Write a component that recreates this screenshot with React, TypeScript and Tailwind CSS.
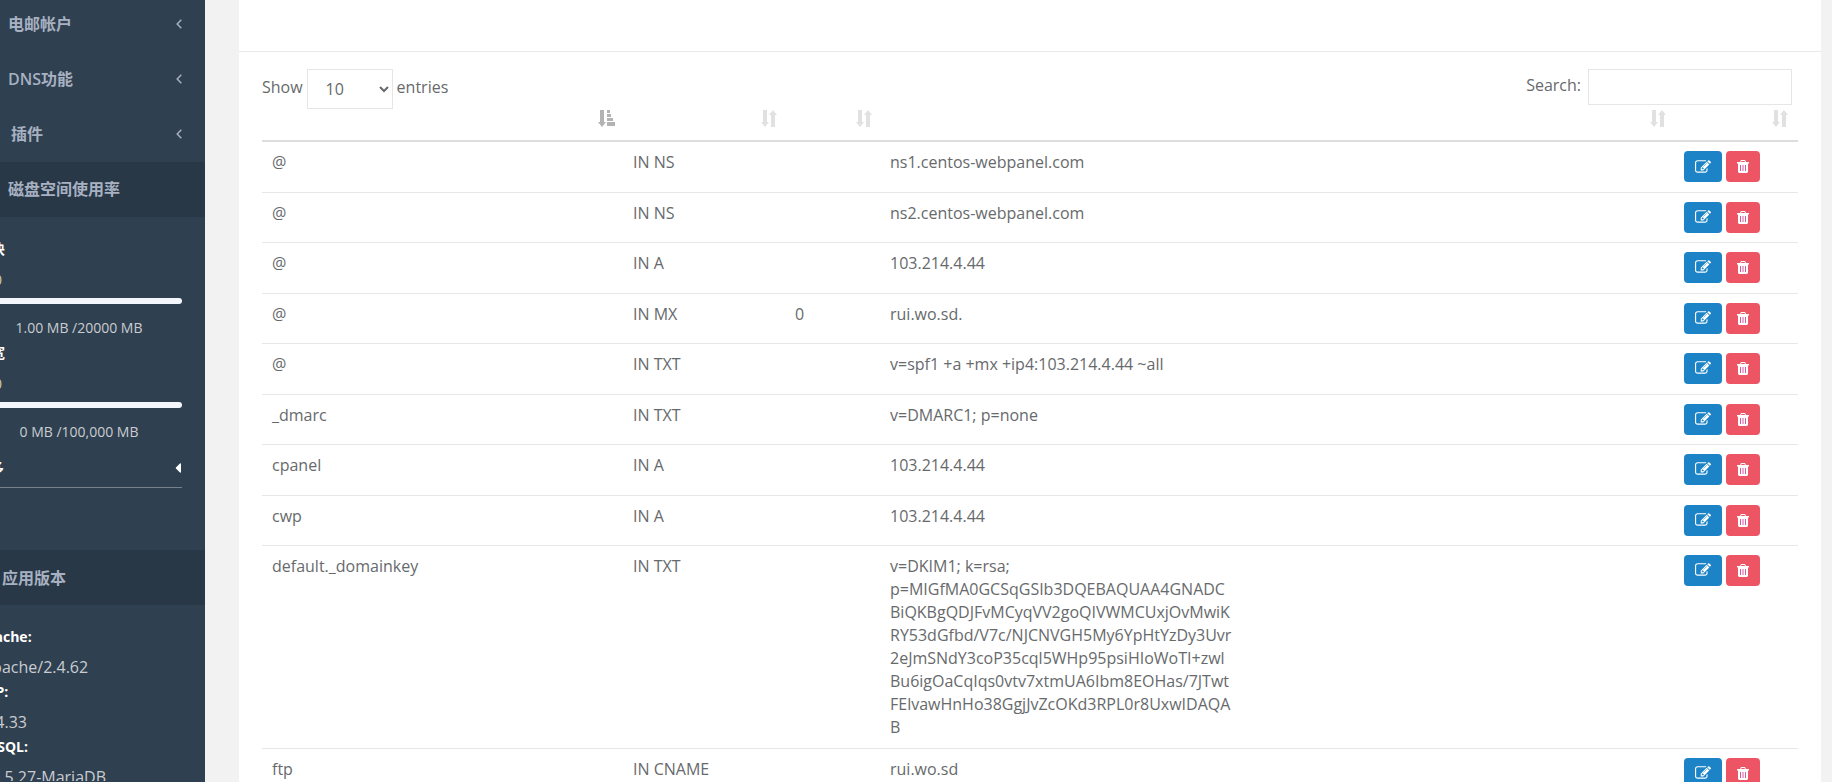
import { FaCaretLeft } from "react-icons/fa";

interface DnsRecord {
  name: string;
  type: string;
  priority?: string;
  value: string;
}

const records: DnsRecord[] = [
  { name: "@", type: "IN NS", value: "ns1.centos-webpanel.com" },
  { name: "@", type: "IN NS", value: "ns2.centos-webpanel.com" },
  { name: "@", type: "IN A", value: "103.214.4.44" },
  { name: "@", type: "IN MX", priority: "0", value: "rui.wo.sd." },
  { name: "@", type: "IN TXT", value: "v=spf1 +a +mx +ip4:103.214.4.44 ~all" },
  { name: "_dmarc", type: "IN TXT", value: "v=DMARC1; p=none" },
  { name: "cpanel", type: "IN A", value: "103.214.4.44" },
  { name: "cwp", type: "IN A", value: "103.214.4.44" },
  {
    name: "default._domainkey",
    type: "IN TXT",
    value:
      "v=DKIM1; k=rsa; p=MIGfMA0GCSqGSIb3DQEBAQUAA4GNADCBiQKBgQDJFvMCyqVV2goQIVWMCUxjOvMwiKRY53dGfbd/V7c/NJCNVGH5My6YpHtYzDy3Uvr2eJmSNdY3coP35cql5WHp95psiHIoWoTI+zwlBu6igOaCqIqs0vtv7xtmUA6Ibm8EOHas/7JTwtFElvawHnHo38GgjJvZcOKd3RPL0r8UxwIDAQAB",
  },
  { name: "ftp", type: "IN CNAME", value: "rui.wo.sd" },
];

const menu = [
  { label: "电邮帐户", indent: "pl-[38px]" },
  { label: "DNS功能", indent: "pl-[38px]" },
  { label: "插件", indent: "pl-[41px]" },
];

const usage = [
  { title: "硬块", percent: "0", text: "1.00 MB /20000 MB" },
  { title: "带宽", percent: "0", text: "0 MB /100,000 MB" },
];

const versions = [
  { name: "Apache:", version: "Apache/2.4.62" },
  { name: "PHP:", version: "7.4.33" },
  { name: "MySQL:", version: "10.5.27-MariaDB" },
];

const columns = ["Name", "Type", "Priority", "Value", "Actions"];

function AngleLeft() {
  return (
    <svg viewBox="0 0 6 10" className="mr-[5px] h-2.5 w-1.5 fill-none stroke-current" aria-hidden="true">
      <path d="M5.300 0.700L1.200 5l4.100 4.300" strokeWidth="1.500" />
    </svg>
  );
}

function SortIcon({ active }: { active: boolean }) {
  return active ? (
    <svg viewBox="0 0 17 17" className="ml-auto size-[17px] fill-[#b3b3b3]" aria-hidden="true">
      <path d="M2 0h4v12h2l-4 5-4-5h2zM9 0h3v3H9zM9 4h4v3H9zM9 8h6v3H9zM9 12h8v4H9z" />
    </svg>
  ) : (
    <svg viewBox="0 0 16 17" className="ml-auto h-[17px] w-4 fill-[#e1e1e1]" aria-hidden="true">
      <path d="M2 0h4v12h2l-4 5-4-5h2zM10 17h4V5h2l-4-5-4 5h2z" />
    </svg>
  );
}

function EditIcon() {
  return (
    <svg viewBox="0 0 1792 1792" className="size-4 fill-white" aria-hidden="true">
      <path d="M888 1184l116-116-152-152-116 116v56h96v96h56zm440-720q-16-16-33 1l-350 350q-17 17-1 33t33-1l350-350q17-17 1-33zm80 594v190q0 119-84.500 203.500t-203.500 84.500h-832q-119 0-203.500-84.500t-84.500-203.500v-832q0-119 84.500-203.500t203.500-84.500h832q63 0 117 25 15 7 18 23 3 17-9 29l-49 49q-14 14-32 8-23-6-45-6h-832q-66 0-113 47t-47 113v832q0 66 47 113t113 47h832q66 0 113-47t47-113v-126q0-13 9-22l64-64q15-15 35-7t20 29zm-96-738l288 288-672 672h-288v-288zm444 132l-92 92-288-288 92-92q28-28 68-28t68 28l152 152q28 28 28 68t-28 68z" />
    </svg>
  );
}

function TrashIcon() {
  return (
    <svg viewBox="0 0 12 13" className="h-[13px] w-3" aria-hidden="true">
      <path d="M4 0h4l1 2h3v1.500h-1V12l-1 1H2l-1-1V3.500H0V2h3zM4.500 1L4 2h4l-.5-1z" fill="white" fillRule="evenodd" />
      <path d="M3.500 5v6M6 5v6M8.500 5v6" stroke="#d9589d" strokeWidth="1" />
    </svg>
  );
}

function Sidebar() {
  return (
    <aside className="w-[205px] shrink-0 overflow-hidden bg-[#2f4050] text-[#a7b1c2]">
      {/* the left edge of the menu is scrolled out of view */}
      <div className="-ml-[30px] -mt-[3px]">
        <nav>
          {menu.map((item) => (
            <a
              key={item.label}
              href="#"
              className={`flex h-[55px] items-center justify-between pb-0.5 pr-[18px] font-semibold ${item.indent}`}
            >
              {item.label}
              <AngleLeft />
            </a>
          ))}
        </nav>
        <h2 className="flex h-[55px] items-center bg-[#293846] pb-0.5 pl-[38px] font-semibold">磁盘空间使用率</h2>
        <div className="h-[333px] pr-[23px] pt-5">
          {usage.map((item) => (
            <div key={item.title} className="h-[104px] text-sm">
              <div className="w-[35px] text-right font-bold leading-6 text-white">{item.title}</div>
              <div className="mb-1 w-8 pt-1 text-right leading-[29px] text-[#d8cdb8]">{item.percent}</div>
              <div className="h-1.5 rounded-full bg-[#f3f6fb]" />
              <div className="pl-1.5 pt-2.5 text-center leading-7 text-[#c9ccd0]">{item.text}</div>
            </div>
          ))}
          <a
            href="#"
            className="flex h-[43px] items-center justify-between border-b border-[#76818c] pt-1 text-sm font-bold text-white"
          >
            <span className="w-[34px] text-right">更多</span>
            <FaCaretLeft className="-mr-1 size-4" />
          </a>
        </div>
        <h2 className="flex h-[55px] items-center bg-[#293846] pl-8 font-semibold">应用版本</h2>
        <dl className="h-[176px] overflow-hidden pl-1.5 pt-[19px]">
          {versions.map((item) => (
            <div key={item.name} className="h-[55px]">
              <dt className="text-sm font-bold leading-[26px] text-white">{item.name}</dt>
              <dd className="pl-1.5 leading-[35px] text-[#c9ccd0]">{item.version}</dd>
            </div>
          ))}
        </dl>
      </div>
    </aside>
  );
}

export default function App() {
  return (
    <div className="flex h-screen overflow-hidden bg-[#f2f2f2] font-['Open_Sans','Noto_Sans_CJK_SC',sans-serif] text-base text-[#676a6c]">
      <Sidebar />
      <main className="ml-[34px] mr-[11px] min-w-0 flex-1 bg-white">
        <div className="h-[52px] border-b border-[#e7eaec]" />
        <div className="px-[23px] pt-[17px]">
          <div className="flex h-9 items-start justify-between pr-1.5">
            <label className="flex items-start gap-1 leading-9">
              Show
              <select className="h-10 w-[86px] border border-[#e5e6e7] bg-white pl-[14px]">
                <option>10</option>
                <option>25</option>
                <option>50</option>
              </select>
              entries
            </label>
            <label className="flex items-start gap-[7px] leading-8">
              Search:
              <input type="search" className="h-9 w-[204px] border border-[#e5e6e7] bg-white px-3" />
            </label>
          </div>
          <table className="w-full table-fixed border-collapse leading-[23px]">
            <colgroup>
              <col className="w-[361px]" />
              <col className="w-[162px]" />
              <col className="w-[95px]" />
              <col />
              <col className="w-[124px]" />
            </colgroup>
            <thead>
              <tr className="h-9 border-b-2 border-[#dddddd]">
                {columns.map((column, index) => (
                  <th key={column} aria-label={column} className="pr-2 pt-[5px] align-top last:pr-2.5">
                    <SortIcon active={index === 0} />
                  </th>
                ))}
              </tr>
            </thead>
            <tbody>
              {records.map((record, index) => (
                <tr key={index} className="border-b border-[#e7e7e7] align-top odd:h-[51px] even:h-[50px]">
                  <td className="px-2.5 py-[9px]">{record.name}</td>
                  <td className="px-2.5 py-[9px]">{record.type}</td>
                  <td className="px-2.5 py-[9px]">{record.priority}</td>
                  <td className="px-2.5 py-[9px]">
                    <div className="w-[344px] break-words">{record.value}</div>
                  </td>
                  <td className="px-2.5 py-[9px]">
                    <div className="flex gap-1">
                      <button
                        type="button"
                        aria-label="Edit"
                        className="flex h-[31px] w-[38px] items-center justify-center rounded bg-[#1c84c6]"
                      >
                        <EditIcon />
                      </button>
                      <button
                        type="button"
                        aria-label="Delete"
                        className="flex h-[31px] w-[34px] items-center justify-center rounded bg-[#ed5565]"
                      >
                        <TrashIcon />
                      </button>
                    </div>
                  </td>
                </tr>
              ))}
            </tbody>
          </table>
        </div>
      </main>
    </div>
  );
}
